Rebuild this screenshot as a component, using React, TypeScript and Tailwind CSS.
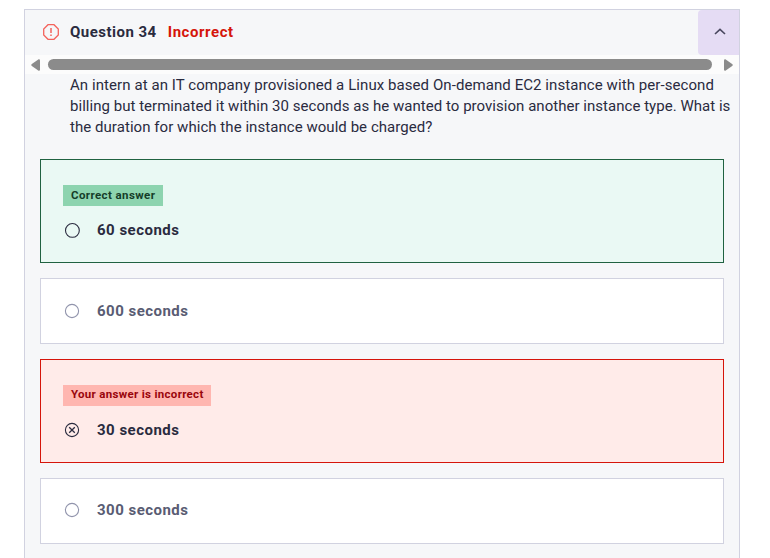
import React from "react";

type Status = "correct" | "incorrect" | "neutral";

interface Answer {
  label: string;
  status: Status;
  tag?: string;
  last?: boolean;
}

const answers: Answer[] = [
  { label: "60 seconds", status: "correct", tag: "Correct answer" },
  { label: "600 seconds", status: "neutral" },
  { label: "30 seconds", status: "incorrect", tag: "Your answer is incorrect" },
  { label: "300 seconds", status: "neutral", last: true },
];

const boxStyles: Record<Status, string> = {
  correct: "h-[104px] border-[#206241] bg-[#eaf9f4]",
  incorrect: "h-[104px] border-[#d5150b] bg-[#ffebe9]",
  neutral: "h-[66px] border-[#d1d2e0] bg-white",
};

const tagStyles: Record<Status, string> = {
  correct: "w-[100px] bg-[#8dd4af] text-[#153d29] leading-[21px] tracking-[0.4px]",
  incorrect: "w-[148px] bg-[#ffb6b0] text-[#99050c] leading-[19px] tracking-[0.31px]",
  neutral: "",
};

function Radio({ status }: { status: Status }) {
  const color = status === "neutral" ? "text-[#9194ac]" : "text-[#2a2b3f]";
  return (
    <svg className={`size-4 shrink-0 ${color}`} viewBox="0 0 16 16" fill="none" stroke="currentColor" strokeWidth="1.1">
      {status === "correct" ? <circle cx="8.4" cy="8.4" r="6.9" /> : <circle cx="8" cy="8" r="6.6" />}
      {status === "incorrect" && <path d="M5.2 5.2l5.6 5.6M10.8 5.2l-5.6 5.6" strokeWidth="1.3" />}
    </svg>
  );
}

function AnswerBox({ answer }: { answer: Answer }) {
  const { status, tag, label, last } = answer;
  return (
    <div className={`border pl-[22px] ${boxStyles[status]} ${tag ? "pt-[25px]" : last ? "pt-[23px]" : "pt-6"}`}>
      {tag && (
        <div className={`mb-4 h-[21px] whitespace-nowrap pl-2 text-[11.5px] font-bold ${tagStyles[status]}`}>
          {tag}
        </div>
      )}
      <div className="flex h-4 items-center gap-[17px] pl-px">
        <Radio status={status} />
        <span
          className={`whitespace-nowrap text-[15px] font-bold leading-4 tracking-[0.48px] ${
            status === "neutral" ? "text-[#595c73]" : "text-[#2a2b3f]"
          }`}
        >
          {label}
        </span>
      </div>
    </div>
  );
}

function Scrollbar() {
  return (
    <div className="flex h-[19px] items-center bg-[#fcfcfc] pl-1.5 pr-[6px] text-[#8b8b8b]">
      <svg className="h-3 w-[9px]" viewBox="0 0 9 12" fill="currentColor">
        <path d="M7.6 .2 .5 5.2Q0 6 .5 6.8L7.6 11.8Q9 12 9 10.5V1.5Q9 0 7.6.2Z" />
      </svg>
      <div className="ml-2 h-[11px] w-[664px] rounded-full bg-[#8b8b8b]" />
      <svg className="ml-3 h-3 w-[9px]" viewBox="0 0 9 12" fill="currentColor">
        <path d="M1.4 .2 8.5 5.2Q9 6 8.5 6.8L1.4 11.8Q0 12 0 10.5V1.5Q0 0 1.4.2Z" />
      </svg>
    </div>
  );
}

export default function App() {
  return (
    <div className="h-[558px] overflow-hidden bg-white pl-6 pt-[9px] font-['Roboto','Liberation_Sans',sans-serif] text-[#2a2b3f]">
      <section className="h-[560px] w-[716px] border border-[#d1d2e0] bg-[#f6f7f9]">
        <header className="flex h-[45px] items-center pl-[18px]">
          <svg className="mb-px size-4 shrink-0" viewBox="0 0 16 16" fill="none" stroke="#f4635c" strokeWidth="1.3">
            <path d="M5 .7h6L15.300 5v6L11 15.300H5L.7 11V5z" />
            <path d="M8 4v5M8 10.5v1.500" strokeWidth="1.5" />
          </svg>
          <h2 className="ml-[11px] whitespace-nowrap text-[15px] font-bold tracking-[0.48px]">Question 34</h2>
          <span className="ml-[11px] whitespace-nowrap text-[15px] font-bold tracking-[0.56px] text-[#d5150b]">Incorrect</span>
          <button className="ml-auto flex h-[45px] w-[41px] items-center justify-center rounded-l bg-[#e5dcf4] pb-0.5 pl-[3px]" aria-label="Collapse">
            <svg className="h-[7px] w-3" viewBox="0 0 12 7" fill="none" stroke="#49475f" strokeWidth="1.6">
              <path d="M1 6 6 1.300 11 6" />
            </svg>
          </button>
        </header>
        <Scrollbar />
        <div className="whitespace-nowrap pl-[45px] pt-px text-[15px] leading-[21px]">
          <p className="tracking-[0.075px]">An intern at an IT company provisioned a Linux based On-demand EC2 instance with per-second</p>
          <p className="tracking-[0.032px]">billing but terminated it within 30 seconds as he wanted to provision another instance type. What is</p>
          <p className="tracking-[0.05px]">the duration for which the instance would be charged?</p>
        </div>
        <div className="mt-[21px] flex flex-col gap-[15px] pl-[15px] pr-[15px]">
          {answers.map((a) => (
            <AnswerBox key={a.label} answer={a} />
          ))}
        </div>
      </section>
    </div>
  );
}
